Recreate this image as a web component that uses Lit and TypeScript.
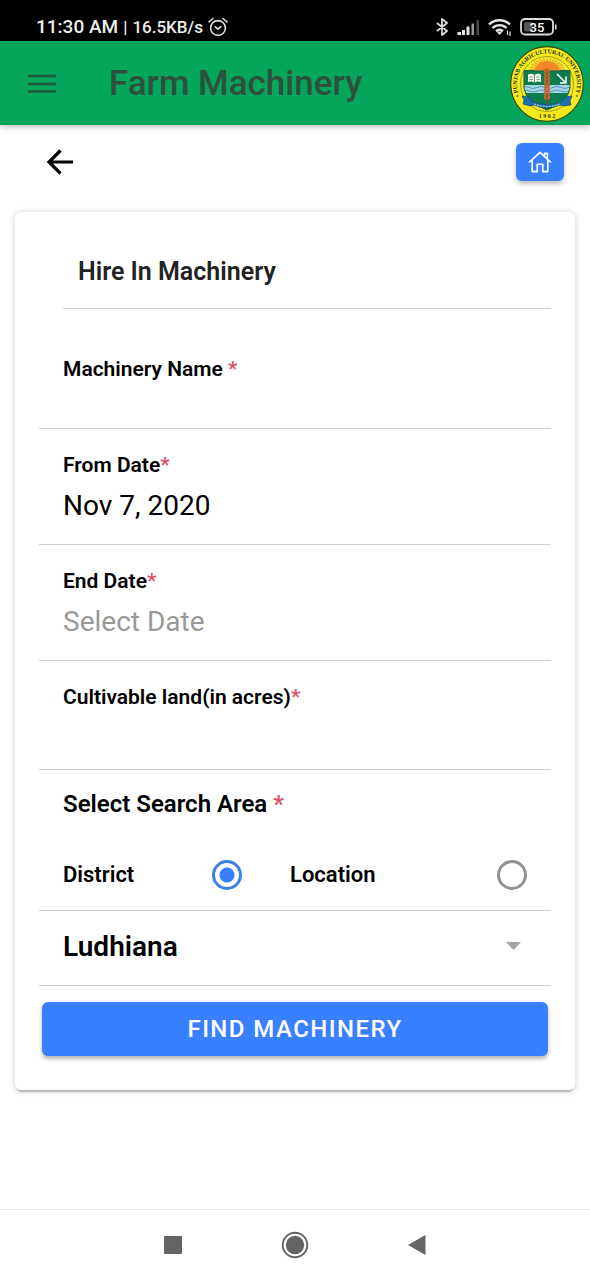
import { LitElement, html, css, svg } from "lit";
import { customElement, property, state } from "lit/decorators.js";

@customElement("status-bar")
class StatusBar extends LitElement {
  static styles = css`
    :host { display: block; background: #000; color: #eee; }
    .bar { display: flex; justify-content: space-between; align-items: center; height: 41px; box-sizing: border-box; padding: 12px 33px 0 36px; }
    .side { display: flex; align-items: center; gap: 5px; font-size: 19px; font-weight: 500; line-height: 24px; }
    .rate { font-size: 17px; }
    .icons { gap: 8px; }
    svg { display: block; }
    .battery { font: 500 13px Roboto, sans-serif; }
  `;
  render() {
    return html`<div class="bar">
      <div class="side">
        <span>11:30 AM</span><span class="rate">|</span><span class="rate">16.5KB/s</span>
        <svg width="20" height="20" viewBox="0 0 20 20" fill="none" stroke="#ddd" stroke-width="1.6" stroke-linecap="round">
          <circle cx="10" cy="11" r="7.4" /><path d="M1 4.8 5 1.5M19 4.8 15 1.5M7.3 9.8l2.7 2.4 2.9-2.6" />
        </svg>
      </div>
      <div class="side icons">
        <svg width="12" height="18" viewBox="0 0 12 18" fill="none" stroke="#ddd" stroke-width="1.8" stroke-linejoin="round">
          <path d="M1 5l10 8-5 4V1l5 4-10 8" />
        </svg>
        <svg width="24" height="18" viewBox="0 0 24 18">
          <g fill="#e6e6e6"><path d="M1.500 14H5v3H1.500z" /><path d="M6 12h3v5H6z" /><path d="M10.500 8.500h3V17h-3z" /></g>
          <path fill="#999" d="M15.500 5.500H18V17h-2.500z" /><path fill="#4c4c4c" d="M20.500 2H23v15h-2.500z" />
        </svg>
        <svg width="24" height="18" viewBox="0 0 24 18" fill="none" stroke="#e6e6e6" stroke-width="2.400">
          <path d="M1 6.500a15 15 0 0 1 21 0M4.500 10a10 10 0 0 1 14 0M8 13.200a5.500 5.500 0 0 1 7 0" />
          <path fill="#e6e6e6" stroke="none" d="M8.500 13.500h6L11.500 17z" />
          <path stroke-width="1.200" d="M19.500 12.500v4.500M22 13.500V18" />
        </svg>
        <svg class="battery" width="37" height="18" viewBox="0 0 37 18">
          <rect x="1" y="1" width="32" height="15.500" rx="4" fill="none" stroke="#ddd" stroke-width="1.800" />
          <rect x="4" y="4" width="9" height="9.500" rx="2" fill="#555" />
          <path d="M35 6.500h1.500v5H35z" fill="#ddd" />
          <text x="17" y="13.500" text-anchor="middle" fill="#fff">35</text>
        </svg>
      </div>
    </div>`;
  }
}

@customElement("university-seal")
class UniversitySeal extends LitElement {
  static styles = css`
    :host { display: block; }
    svg { display: block; width: 74px; height: 76px; }
    .ring { font: 700 6px "Liberation Serif", serif; fill: #26331a; }
    .year { font: 700 6px "Liberation Serif", serif; fill: #26331a; }
  `;
  render() {
    const rays = Array.from({ length: 15 }, (_, i) => {
      const a = Math.PI + (Math.PI * (i + 0.5)) / 15;
      return svg`<line x1=${37 + 8 * Math.cos(a)} y1=${25 + 8 * Math.sin(a)} x2=${37 + 18 * Math.cos(a)} y2=${25 + 13 * Math.sin(a)} />`;
    });
    const grains = Array.from({ length: 8 }, (_, i) => svg`
      <ellipse cx="35.300" cy=${25 + i * 3.8} rx="1.300" ry="2.300" transform="rotate(-28 35.300 ${25 + i * 3.8})" />
      <ellipse cx="38.700" cy=${25 + i * 3.8} rx="1.300" ry="2.300" transform="rotate(28 38.700 ${25 + i * 3.8})" />`);
    return html`<svg viewBox="0 0 74 76" role="img" aria-label="Punjab Agricultural University">
      <defs>
        <path id="arc" d="M18 61.500A30 30.500 0 1 1 56 61.500" />
        <clipPath id="field"><path d="M14 24H60V42Q58 56 37 64Q16 56 14 42Z" /></clipPath>
      </defs>
      <ellipse cx="37" cy="38" rx="36.300" ry="37.300" fill="#f6e81c" stroke="#3a4a14" stroke-width="1.200" />
      <ellipse cx="37" cy="38" rx="26.500" ry="27.500" fill="#f5e62a" stroke="#8d9420" stroke-width=".8" />
      <g stroke="#eda52d" stroke-width="1.100">${rays}</g>
      <g clip-path="url(#field)">
        <path d="M10 24h54v42H10z" fill="#0b7d50" />
        <path d="M10 39h54v8H10z" fill="#a7d5e5" />
        <path d="M11 41.500q4-2 8 0t8 0 8 0 8 0 8 0 8 0 8 0M11 45q4-2 8 0t8 0 8 0 8 0 8 0 8 0 8 0" stroke="#4e9ac4" fill="none" />
      </g>
      <path d="M24 25q3-10 13-10t13 10z" fill="#f08a28" />
      <path d="M14 25H60V42Q58 56 37 64Q16 56 14 42Z" fill="none" stroke="#17603b" />
      <path d="M18 28.500q4-1.500 6.500.5 3-2 6.500-.5v7.500q-4-1-6.500.5-3-1.500-6.500-.5z" fill="#eef5e6" />
      <path d="M24.500 29v7M19.500 31H23M19.500 33.500H23M26.500 31h3M26.500 33.500h3" stroke="#63806b" stroke-width=".8" />
      <path d="M47 28l8.500 8.500M56 30.500V37h-6" fill="none" stroke="#fff" stroke-width="1.500" />
      <g fill="#d0662b">${grains}</g><path d="M37 22v36" stroke="#a34a1b" stroke-width=".8" />
      <path d="M12 50l7 1 4 5q14 5 28 0l4-5 7-1-2 5 1 4-7 1-4-1q-13 6-26 0l-4 1-7-2 1-4z" fill="#1c6fa8" stroke="#154c77" stroke-width=".7" />
      <path d="M24 58q13 5 26 0" fill="none" stroke="#a9cfe2" stroke-width="1.300" stroke-dasharray="2 1" />
      <text class="ring" text-anchor="middle"><textPath href="#arc" startOffset="50%">• PUNJAB AGRICULTURAL UNIVERSITY •</textPath></text>
      <text class="year" x="37" y="72" text-anchor="middle">1 9 6 2</text>
    </svg>`;
  }
}

@customElement("app-header")
class AppHeader extends LitElement {
  @property() heading = "";
  static styles = css`
    :host { display: block; position: relative; z-index: 1; }
    header { display: flex; align-items: center; height: 84px; box-sizing: border-box; padding: 2px 6px 0 28px; background: #04a65b; box-shadow: 0 2px 6px rgba(0, 0, 0, 0.25); }
    button { border: 0; padding: 0; background: none; }
    svg { display: block; }
    h1 { flex: 1; margin: 0 0 0 53px; font-size: 35px; line-height: 42px; font-weight: 500; color: #2f4f3f; }
  `;
  render() {
    return html`<header>
      <button aria-label="Menu"><svg width="28" height="20" viewBox="0 0 28 20" stroke="#1d5638" stroke-width="2.600"><path d="M0 2h28M0 10h28M0 17.500h28" /></svg></button>
      <h1>${this.heading}</h1>
      <university-seal></university-seal>
    </header>`;
  }
}

@customElement("hire-form")
class HireForm extends LitElement {
  @state() area = "district";
  static styles = css`
    :host { display: block; }
    form { margin: 0 15px; padding: 24px 24px 34px; border-radius: 6px; background: #fff; box-shadow: 0 4px 2px -2px rgba(0, 0, 0, 0.22), 0 1px 6px rgba(0, 0, 0, 0.2); }
    h2 { margin: 0 0 0 24px; padding: 20px 15px; border-bottom: 1px solid #d0d0d0; font-size: 25px; line-height: 32px; font-weight: 600; color: #222; }
    .row { border-bottom: 1px solid #d0d0d0; padding: 0 24px; box-sizing: border-box; }
    .field { display: flex; flex-direction: column; padding-top: 22px; height: 116px; }
    .first { padding-top: 46px; height: 120px; }
    .short { height: 109px; }
    label { font-size: 21px; line-height: 28px; font-weight: 600; color: #000; }
    .req { color: #e0516a; }
    input, select { font-family: inherit; color: #000; }
    .text { border: 0; outline: 0; padding: 0; width: 100%; height: 52px; background: none; font-size: 28px; line-height: 36px; font-weight: 400; }
    .text::placeholder { color: #999; opacity: 1; }
    fieldset { margin: 0; border: 0; border-bottom: 1px solid #d0d0d0; padding: 0 24px; min-width: 0; }
    legend { padding: 18px 0 0; font-size: 24px; line-height: 32px; font-weight: 600; color: #000; }
    .choices { display: grid; grid-template-columns: 179px 1fr; gap: 48px; padding: 40px 0 20px; }
    .choice { display: flex; justify-content: space-between; align-items: center; font-size: 22px; line-height: 30px; }
    .choice input { appearance: none; margin: 0; width: 30px; height: 30px; border: 3px solid #929292; border-radius: 50%; }
    .choice input:checked { border-color: #3b7ee6; background: radial-gradient(circle, #3880ff 7px, transparent 8px); }
    .pick { display: grid; align-items: center; height: 75px; padding: 0 30px 4px 24px; }
    .pick > * { grid-area: 1 / 1; }
    select { appearance: none; border: 0; padding: 0; width: 100%; height: 60px; background: none; font-size: 28px; font-weight: 600; }
    .pick svg { justify-self: end; pointer-events: none; }
    .submit { display: block; width: calc(100% - 6px); height: 54px; margin: 16px 3px 0; border: 0; border-radius: 6px; background: #3880ff; color: #fff; font-family: inherit; font-size: 24px; font-weight: 500; letter-spacing: 0.06em; text-transform: uppercase; box-shadow: 0 3px 4px rgba(0, 0, 0, 0.3); }
  `;
  render() {
    const req = html`<span class="req">*</span>`;
    return html`<form @submit=${(e: Event) => e.preventDefault()}>
      <h2>Hire In Machinery</h2>
      <div class="row field first"><label for="name">Machinery Name ${req}</label><input class="text" id="name" /></div>
      <div class="row field"><label for="from">From Date${req}</label><input class="text" id="from" value="Nov 7, 2020" /></div>
      <div class="row field"><label for="end">End Date${req}</label><input class="text" id="end" placeholder="Select Date" /></div>
      <div class="row field short"><label for="land">Cultivable land(in acres)${req}</label><input class="text" id="land" inputmode="decimal" /></div>
      <fieldset>
        <legend>Select Search Area ${req}</legend>
        <div class="choices">
          ${["District", "Location"].map((name) => html`<label class="choice">${name}<input type="radio" name="area"
            .checked=${this.area === name.toLowerCase()} @change=${() => (this.area = name.toLowerCase())} /></label>`)}
        </div>
      </fieldset>
      <div class="row pick">
        <select aria-label="District name"><option>Ludhiana</option></select>
        <svg width="15" height="8" viewBox="0 0 15 8"><path d="M0 0h15L7.500 8z" fill="#a3a3a3" /></svg>
      </div>
      <button class="submit">Find Machinery</button>
    </form>`;
  }
}

@customElement("app-root")
class AppRoot extends LitElement {
  static styles = css`
    :host { display: flex; flex-direction: column; min-height: 100vh; background: #fff; font-family: Roboto, sans-serif; }
    main { flex: 1; }
    .tools { display: flex; justify-content: space-between; align-items: center; padding: 18px 26px 31px 46px; }
    button { border: 0; padding: 0; background: none; }
    svg { display: block; }
    .home { display: grid; place-items: center; width: 48px; height: 38px; border-radius: 6px; background: #3880ff; box-shadow: 0 3px 4px rgba(0, 0, 0, 0.25); }
    nav { display: flex; justify-content: center; align-items: center; gap: 94px; height: 71px; box-sizing: border-box; border-top: 1px solid #eaeaea; }
    nav button { display: grid; place-items: center; width: 28px; height: 28px; }
  `;
  render() {
    return html`
      <status-bar></status-bar>
      <app-header heading="Farm Machinery"></app-header>
      <main>
        <div class="tools">
          <button aria-label="Back"><svg width="28" height="26" viewBox="0 0 28 26" fill="none" stroke="#000" stroke-width="3.200"><path d="M27 13H3M14.500 1.500 3 13l11.500 11.500" /></svg></button>
          <button class="home" aria-label="Home"><svg width="24" height="22" viewBox="0 0 26 24" fill="none" stroke="#fff" stroke-width="1.800" stroke-linejoin="round" stroke-linecap="round"><path d="M1.500 12 13 1.500 24.500 12M4.500 10v12.500h5.500v-8h6v8h5.500V10M18 5.500V2.500h3v6" /></svg></button>
        </div>
        <hire-form></hire-form>
      </main>
      <nav aria-label="System">
        <button aria-label="Recent apps"><svg width="18" height="18"><rect width="18" height="18" rx="1" fill="#646464" /></svg></button>
        <button aria-label="Home screen"><svg width="28" height="28" viewBox="0 0 28 28"><circle cx="14" cy="14" r="12.300" fill="none" stroke="#646464" stroke-width="1.900" /><circle cx="14" cy="14" r="9.200" fill="#646464" /></svg></button>
        <button aria-label="Go back"><svg width="18" height="20" viewBox="0 0 18 20"><path d="M17.500 0v20L0 10z" fill="#646464" /></svg></button>
      </nav>`;
  }
}
